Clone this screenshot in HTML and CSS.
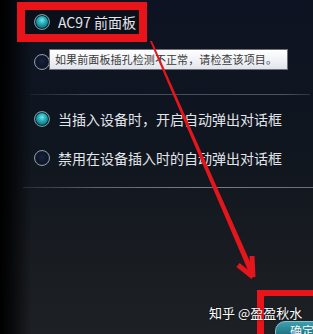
FILE: index.html
```html
<!DOCTYPE html>
<html lang="zh">
<head>
<meta charset="utf-8">
<link rel="stylesheet" href="styles.css">
</head>
<body>
<div class="screen">
  <div class="options">
    <div class="row highlight">
      <span class="radio on"></span>
      <span class="label">AC97 前面板</span>
    </div>
    <div class="row row-plain">
      <span class="radio"></span>
    </div>
    <div class="sep sep1"></div>
    <div class="row row-plain">
      <span class="radio on"></span>
      <span class="label">当插入设备时，开启自动弹出对话框</span>
    </div>
    <div class="row row-plain">
      <span class="radio"></span>
      <span class="label">禁用在设备插入时的自动弹出对话框</span>
    </div>
    <div class="sep sep2"></div>
  </div>

  <div class="tooltip">如果前面板插孔检测不正常，请检查该项目。</div>

  <div class="ok-btn">确定</div>
  <div class="mark-box"></div>
  <div class="watermark">知乎 @盈盈秋水</div>

  <svg class="arrow" width="313" height="334" viewBox="0 0 313 334">
    <polygon points="150,41 152,41 255,273 250,275" fill="#e4161b"/>
    <path d="M253,277 L252,256 M253,277 L238,265" stroke="#e4161b" stroke-width="5" fill="none" stroke-linecap="butt"/>
  </svg>
</div>
</body>
</html>
```

FILE: styles.css
```css
html, body {
  margin: 0;
  padding: 0;
}
body {
  width: 313px;
  height: 334px;
  overflow: hidden;
  font-family: "Noto Sans CJK SC", "Noto Sans", sans-serif;
}
.screen {
  position: relative;
  width: 313px;
  height: 334px;
  overflow: hidden;
  background:
    linear-gradient(to right, #000 0px, rgba(0,0,0,0.7) 12px, rgba(0,0,0,0) 32px),
    linear-gradient(to bottom, #0d1322 0%, #10161f 45%, #171b21 70%, #1d2024 100%);
}
.options {
  display: flex;
  flex-direction: column;
  padding-top: 2px;
}
.row {
  display: flex;
  align-items: center;
  gap: 8px;
  height: 38px;
  padding-left: 34px;
}
.row + .row { margin-top: 1px; }
.highlight {
  align-self: flex-start;
  margin-left: 17px;
  padding-left: 9px;
  padding-right: 3px;
  height: 24px;
  border: 8px solid #e8141a;
  background: #0b0f18;
}
.label {
  color: #e2e5ea;
  font-size: 14px;
  line-height: 1;
  white-space: nowrap;
}
.radio {
  box-sizing: border-box;
  width: 16px;
  height: 16px;
  border-radius: 50%;
  border: 1px solid #8f9cab;
  background: radial-gradient(circle at 50% 45%, #17243c 0%, #0b1222 70%);
  box-shadow: inset 0 0 0 1px #1a2436;
  flex: none;
}
.radio.on {
  border-color: #8098a6;
  background: radial-gradient(circle at 50% 38%, #78e6ec 0%, #27b0bb 32%, #10717c 68%, #0a3c46 100%);
  box-shadow: inset 0 0 0 1px #0d2a33;
}
.sep {
  height: 1px;
}
.sep1 {
  margin: 13px 3px 5px 30px;
  background: linear-gradient(to right, rgba(70,78,92,0.2), #414959 20%, #4c5462 90%, rgba(74,82,96,0.5));
}
.sep2 {
  margin: 10px 0 0 23px;
  background: linear-gradient(to right, rgba(90,94,100,0.3), #5f6368 25%, #7a7e83 60%, #6b6f74);
}
.tooltip {
  position: absolute;
  left: 49px;
  top: 49px;
  box-sizing: border-box;
  width: 239px;
  height: 21px;
  padding-left: 5px;
  border: 1px solid #6e7076;
  background: linear-gradient(to bottom, #ffffff 0%, #eef0f5 60%, #e2e4ec 100%);
  color: #3a3a3a;
  font-size: 11px;
  letter-spacing: 0.1px;
  line-height: 19px;
  white-space: nowrap;
}
.ok-btn {
  position: absolute;
  left: 275px;
  top: 321px;
  box-sizing: border-box;
  width: 60px;
  height: 22px;
  padding-left: 14px;
  border-radius: 10px;
  border: 1px solid #7fc6d0;
  background: linear-gradient(to bottom, #3e9fae 0%, #1f7584 60%, #155766 100%);
  color: #f2f8fa;
  font-size: 12px;
  line-height: 18px;
}
.mark-box {
  position: absolute;
  left: 257px;
  top: 290px;
  width: 80px;
  height: 60px;
  border-left: 7px solid #e8141a;
  border-top: 6px solid #e8141a;
}
.watermark {
  position: absolute;
  left: 209px;
  top: 304px;
  color: #ffffff;
  font-size: 13px;
  line-height: 18px;
  white-space: nowrap;
  text-shadow: 0 0 2px rgba(0,0,0,0.6);
}
.arrow {
  position: absolute;
  left: 0;
  top: 0;
}
```
